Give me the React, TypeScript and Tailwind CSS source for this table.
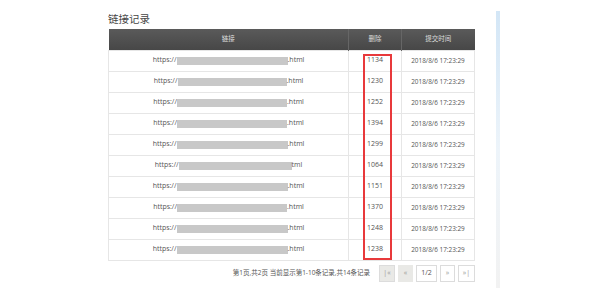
import React from "react";

type Row = { count: number; bar: number; tail: string };

const rows: Row[] = [
  { count: 1134, bar: 111, tail: ".html" },
  { count: 1230, bar: 109, tail: ".html" },
  { count: 1252, bar: 110, tail: ".html" },
  { count: 1394, bar: 110, tail: ".html" },
  { count: 1299, bar: 111, tail: ".html" },
  { count: 1064, bar: 113, tail: "tml" },
  { count: 1151, bar: 111, tail: ".html" },
  { count: 1370, bar: 110, tail: ".html" },
  { count: 1248, bar: 111, tail: ".html" },
  { count: 1238, bar: 111, tail: ".html" },
];

const font = { fontFamily: '"Open Sans", "Noto Sans CJK SC", sans-serif' };

export default function App() {
  return (
    <div className="flex h-[300px] w-[600px] bg-white text-[#555]" style={font}>
      <div className="ml-[108px] flex w-[367px] flex-col">
        <div className="mt-[12px] h-[17px] text-[10.5px] leading-[14px] text-[#444]">链接记录</div>

        <div className="relative">
          <table className="w-full border-collapse text-[7px]">
            <thead>
              <tr className="h-[21px] bg-gradient-to-b from-[#5a5a5a] to-[#474747] text-[6.5px] text-[#ddd]">
                <th className="w-[240px] border-r border-[#666] font-normal">链接</th>
                <th className="w-[53px] border-r border-[#666] font-normal">删除</th>
                <th className="font-normal">提交时间</th>
              </tr>
            </thead>
            <tbody>
              {rows.map((r) => (
                <tr key={r.count} className="h-[21px] border border-[#e6e6e6]">
                  <td className="border-r border-[#e6e6e6]">
                    <div className="flex items-center justify-center">
                      <span>https://</span>
                      <span className="h-[8px] bg-[#c8c8c8]" style={{ width: r.bar }} />
                      <span>{r.tail}</span>
                    </div>
                  </td>
                  <td className="border-r border-[#e6e6e6] text-center">{r.count}</td>
                  <td className="text-center text-[6.4px]">2018/8/6 17:23:29</td>
                </tr>
              ))}
            </tbody>
          </table>
          <div className="absolute left-[255px] top-[25px] h-[206px] w-[29px] border-2 border-[#e8393b]" />
        </div>

        <div className="mt-[4px] flex items-center justify-end text-[7px]">
          <span className="mr-[9px] text-[6.5px] text-[#555]">第1页,共2页 当前显示第1-10条记录,共14条记录</span>
          <div className="flex gap-[3px]">
            <span className="flex h-[17px] w-[16px] items-center justify-center border border-[#dcdcdc] bg-[#e9e9e6] text-[#999]">|«</span>
            <span className="flex h-[17px] w-[15px] items-center justify-center border border-[#e9e9e6] bg-[#e9e9e6] text-[#999]">«</span>
            <span className="flex h-[17px] w-[21px] items-center justify-center border border-[#dcdcdc] bg-white">1/2</span>
            <span className="flex h-[17px] w-[15px] items-center justify-center border border-[#dcdcdc] bg-white text-[#999]">»</span>
            <span className="flex h-[17px] w-[17px] items-center justify-center border border-[#dcdcdc] bg-white text-[#999]">»|</span>
          </div>
        </div>
      </div>

      <div className="ml-[21px] mt-[11px] h-[277px] w-[4px] bg-gradient-to-b from-[#d3e6f6] via-[#edf4fa] to-[#f2f2f2]" />
    </div>
  );
}
